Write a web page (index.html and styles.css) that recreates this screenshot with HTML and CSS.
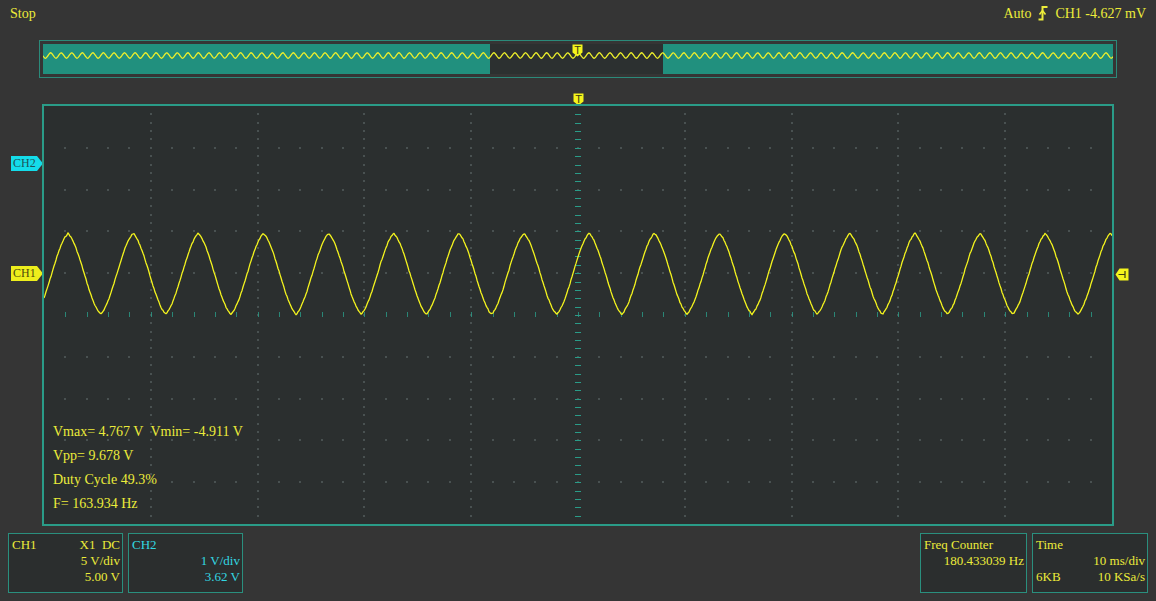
FILE: index.html
```html
<!DOCTYPE html>
<html lang="en">
<head>
    <meta charset="UTF-8">
    <title>Oscilloscope</title>
    <link rel="stylesheet" href="styles.css">
</head>
<body>
    <div class="status">
        <span>Stop</span>
        <div class="trig-info">
            <span>Auto</span>
            <svg class="edge" width="10" height="16" viewBox="0 0 10 16">
                <path d="M0.5 14.5 H4.5 V2 H9.5" fill="none" stroke="#ecec3a" stroke-width="2"/>
                <path d="M1.5 9.5 L4.5 5.5 L7.5 9.5" fill="none" stroke="#ecec3a" stroke-width="1.6"/>
            </svg>
            <span>CH1 -4.627 mV</span>
        </div>
    </div>

    <div class="overview">
        <svg id="overview" width="1070" height="30"></svg>
    </div>

    <div class="scope">
        <div class="marker ch2">CH2</div>
        <div class="marker ch1">CH1</div>

        <svg class="trig-pos" width="11" height="13" viewBox="0 0 11 13">
            <path d="M0.5 0.5 H10.5 V8.5 L5.5 12.5 L0.5 8.5 Z" fill="#f4f41c"/>
            <text x="5.5" y="9.5" text-anchor="middle">T</text>
        </svg>
        <svg class="trig-level" width="14" height="13" viewBox="0 0 14 13">
            <path d="M0.5 6.5 L4.5 0.5 H13.5 V12.5 H4.5 Z" fill="#f4f41c"/>
            <path d="M3.5 6.5 H10 M10 3 V10" fill="none" stroke="#3a3a14" stroke-width="1.2"/>
        </svg>

        <div class="graticule">
            <svg id="grid" width="1068" height="418"></svg>
            <div class="measure">
                <div>Vmax= 4.767 V&nbsp;&nbsp;Vmin= -4.911 V</div>
                <div>Vpp= 9.678 V</div>
                <div>Duty Cycle 49.3%</div>
                <div>F= 163.934 Hz</div>
            </div>
        </div>
    </div>

    <div class="panels">
        <div class="panel">
            <div class="row"><span>CH1</span><span>X1&nbsp;&nbsp;DC</span></div>
            <div class="right">5 V/div</div>
            <div class="right">5.00 V</div>
        </div>
        <div class="panel cyan">
            <div>CH2</div>
            <div class="right">1 V/div</div>
            <div class="right">3.62 V</div>
        </div>
        <div class="spacer"></div>
        <div class="panel freq">
            <div>Freq Counter</div>
            <div class="right">180.433039 Hz</div>
        </div>
        <div class="panel time">
            <div>Time</div>
            <div class="right">10 ms/div</div>
            <div class="row"><span>6KB</span><span>10 KSa/s</span></div>
        </div>
    </div>

    <script src="script.js"></script>
</body>
</html>
```

FILE: styles.css
```css
body {
    margin: 0;
    width: 1156px;
    height: 601px;
    overflow: hidden;
    background-color: #353535;
    font-family: "Liberation Serif", "Times New Roman", serif;
    font-size: 14px;
    line-height: 16px;
    color: #ecec3a;
}

/* top line: run state + trigger */
.status {
    display: flex;
    justify-content: space-between;
    height: 40px;
    padding: 6px 10px 0 10px;
    box-sizing: border-box;
}
.trig-info { display: flex; align-items: flex-start; }
.edge { margin: -1px 7px 0 7px; }

/* memory overview strip */
.overview {
    margin-left: 39px;
    width: 1078px;
    height: 38px;
    padding: 3px;
    border: 1px solid #2b8a7a;
    box-sizing: border-box;
}
.overview svg { display: block; }

/* main screen */
.scope { position: relative; margin-top: 26px; }

.graticule {
    position: relative;
    margin-left: 42px;
    width: 1072px;
    height: 422px;
    border: 2px solid #2a9c88;
    box-sizing: border-box;
    background-color: #2b2f2f;
    display: flex;
    flex-direction: column;
    justify-content: flex-end;
    padding: 0 0 8px 9px;
}
.graticule svg { position: absolute; left: 0; top: 0; }
.measure { position: relative; line-height: 24px; }

.marker {
    position: absolute;
    left: 11px;
    width: 32px;
    height: 15px;
    padding-left: 2px;
    box-sizing: border-box;
    font-size: 12px;
    line-height: 15px;
    clip-path: polygon(0 0, 26px 0, 32px 50%, 26px 100%, 0 100%);
}
.ch2 { top: 52px; background-color: #14dcea; color: #1d5358; }
.ch1 { top: 162px; background-color: #eeee1c; color: #4c4c0c; }

.trig-pos { position: absolute; left: 573px; top: -11px; }
.trig-level { position: absolute; left: 1115px; top: 164px; }
.trig-pos text {
    font-family: "Liberation Sans", Arial, sans-serif;
    font-size: 11px;
    fill: #3a3a14;
}

/* channel / timebase boxes */
.panels {
    display: flex;
    gap: 5px;
    margin-top: 7px;
    padding: 0 8px;
}
.panel {
    width: 115px;
    height: 60px;
    padding: 3px 2px 0 3px;
    border: 1px solid #2a8f7e;
    box-sizing: border-box;
    background-color: #2b2e2e;
    font-size: 13px;
}
.panel.cyan { color: #33d8e2; }
.panel.freq { width: 107px; }
.panel.time { width: 116px; }
.spacer { flex: 1; }
.row { display: flex; justify-content: space-between; }
.right { text-align: right; }
```

FILE: script.js
```js
// draws the overview strip, the graticule and the CH1 trace
const NS = "http://www.w3.org/2000/svg";

const W = 1068, H = 418;
const DIV_X = W / 10, DIV_Y = H / 10;
const CX = W / 2, CY = H / 2;

// CH1: 5 V/div, offset 5.00 V, 10 ms/div
const FREQ = 163.934;
const PERIOD = W / (FREQ * 0.1);
const PEAK_X = 24;
const VMAX = 4.767, VMIN = -4.911;
const CH1_Y = CY - DIV_Y;
const PX_PER_V = DIV_Y / 5;

function el(tag, attrs, parent) {
    const e = document.createElementNS(NS, tag);
    for (const k in attrs) e.setAttribute(k, attrs[k]);
    parent.appendChild(e);
    return e;
}

// mostly sine, a bit of triangle
function wave(x) {
    let p = ((x - PEAK_X) / PERIOD) % 1;
    if (p < 0) p += 1;
    const tri = 1 - 4 * Math.min(p, 1 - p);
    const sine = Math.cos(2 * Math.PI * p);
    return 0.4 * tri + 0.6 * sine;
}

let seed = 7;
function noise() {
    seed = (seed * 9301 + 49297) % 233280;
    return seed / 233280 - 0.5;
}

function trigMark(parent, x, y) {
    const g = el("g", { transform: `translate(${x} ${y})` }, parent);
    el("path", { d: "M0.5 0.5 H10.5 V8.5 L5.5 12.5 L0.5 8.5 Z", fill: "#f4f41c" }, g);
    const t = el("text", {
        x: 5.5, y: 9.5, "text-anchor": "middle",
        "font-family": "Liberation Sans, Arial, sans-serif",
        "font-size": 11, fill: "#3a3a14"
    }, g);
    t.textContent = "T";
}

// graticule
const grid = document.getElementById("grid");
const dots = el("g", { fill: "#495151", "shape-rendering": "crispEdges" }, grid);
for (let i = 1; i < 10; i++) {
    if (i === 5) continue;
    for (let k = 1; k < 50; k++) {
        el("rect", { x: Math.round(i * DIV_X) - 1, y: Math.round(k * DIV_Y / 5) - 1, width: 2, height: 2 }, dots);
        el("rect", { x: Math.round(k * DIV_X / 5) - 1, y: Math.round(i * DIV_Y) - 1, width: 2, height: 2 }, dots);
    }
}

const axes = el("g", { fill: "#2a9c88", "shape-rendering": "crispEdges" }, grid);
for (let k = 1; k < 50; k++) {
    el("rect", { x: Math.round(CX) - 3, y: Math.round(k * DIV_Y / 5), width: 6, height: 1 }, axes);
    el("rect", { x: Math.round(k * DIV_X / 5), y: Math.round(CY) - 3, width: 1, height: 5, opacity: 0.8 }, axes);
}

// CH1 trace
let d = "";
for (let x = 0; x <= W; x++) {
    const v = (VMAX + VMIN) / 2 + (VMAX - VMIN) / 2 * wave(x);
    const y = CH1_Y - v * PX_PER_V + noise() * 1.1;
    d += (x ? "L" : "M") + x + " " + y.toFixed(1);
}
el("path", {
    d, fill: "none", stroke: "#f4f41e",
    "stroke-width": 1.3, "stroke-linejoin": "round"
}, grid);

// overview strip
const ov = document.getElementById("overview");
const OW = 1070, OH = 30, WIN_X = 447, WIN_W = 173;
el("rect", { x: 0, y: 0, width: OW, height: OH, fill: "#21907e" }, ov);
el("rect", { x: WIN_X, y: 0, width: WIN_W, height: OH, fill: "#2c3030" }, ov);

let od = "";
for (let x = 0; x <= OW; x += 0.5) {
    const mx = (x - WIN_X) * W / WIN_W;
    const y = 11.5 - wave(mx) * 2.8;
    od += (x ? "L" : "M") + x + " " + y.toFixed(2);
}
el("path", { d: od, fill: "none", stroke: "#eef02c", "stroke-width": 1.3 }, ov);
trigMark(ov, WIN_X + WIN_W / 2 - 5.5 + 1, 0);
```
